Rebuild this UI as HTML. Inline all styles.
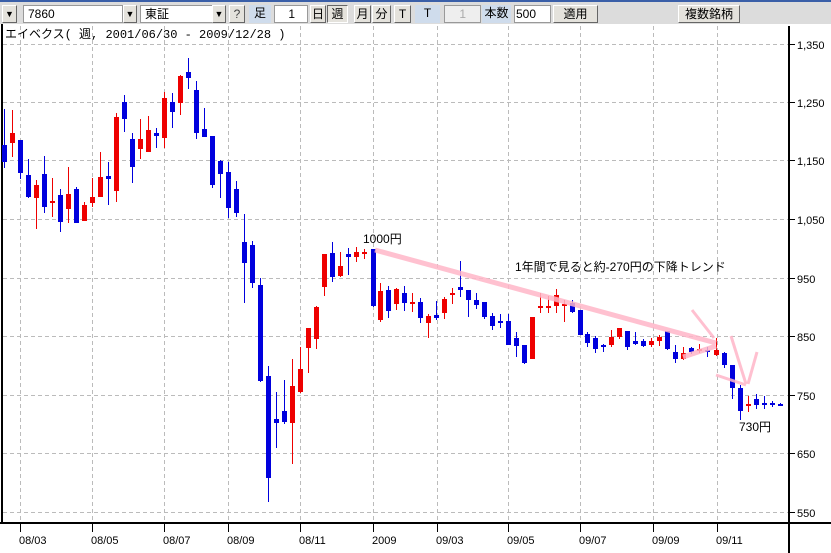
<!DOCTYPE html>
<html><head><meta charset="utf-8">
<style>
body{margin:0;width:831px;height:553px;overflow:hidden;background:#fff;font-family:"Liberation Sans","Noto Sans CJK JP",sans-serif;}
#tb{position:absolute;left:0;top:0;width:831px;height:24px;background:#dcdcdc;border-top:2px solid #3a5fa8;box-sizing:border-box;z-index:2;}
.c{position:absolute;top:3px;height:18px;box-sizing:border-box;font-size:12px;line-height:16px;}
.in{background:#fff;border:1px solid #999;}
.btn{background:#e4e2dc;border:1px solid #fff;border-right-color:#666;border-bottom-color:#666;text-align:center;}
.lb{background:#cfdcec;text-align:center;}
svg{position:absolute;left:0;top:0}
</style></head><body>
<div id="tb">
<div class="c btn" style="left:2px;width:15px;font-size:9px">▼</div>
<div class="c in" style="left:23px;width:100px;padding-left:4px">7860</div>
<div class="c btn" style="left:123px;width:14px;font-size:9px">▼</div>
<div class="c in" style="left:140px;width:86px;padding-left:4px">東証</div>
<div class="c btn" style="left:212px;width:14px;font-size:9px">▼</div>
<div class="c btn" style="left:229px;width:16px;color:#444">?</div>
<div class="c lb" style="left:249px;width:22px">足</div>
<div class="c in" style="left:274px;width:34px;text-align:right;padding-right:12px">1</div>
<div class="c btn" style="left:310px;width:16px">日</div>
<div class="c btn" style="left:327px;width:21px;border-color:#666 #fff #fff #666">週</div>
<div class="c btn" style="left:354px;width:17px">月</div>
<div class="c btn" style="left:372px;width:19px">分</div>
<div class="c btn" style="left:394px;width:17px">T</div>
<div class="c lb" style="left:415px;width:25px">T</div>
<div class="c in" style="left:444px;width:37px;background:#eee;color:#aaa;text-align:right;padding-right:14px">1</div>
<div class="c lb" style="left:482px;width:29px">本数</div>
<div class="c in" style="left:514px;width:37px;text-align:right;padding-right:14px">500</div>
<div class="c btn" style="left:553px;width:45px">適用</div>
<div class="c btn" style="left:678px;width:62px">複数銘柄</div>
</div>
<svg width="831" height="553" viewBox="0 0 831 553">
<rect x="0" y="24" width="831" height="529" fill="#fff"/>
<g stroke="#bbb" stroke-dasharray="4,3" stroke-width="1">
<line x1="3" y1="44.5" x2="789" y2="44.5"/><line x1="3" y1="102.5" x2="789" y2="102.5"/><line x1="3" y1="160.5" x2="789" y2="160.5"/><line x1="3" y1="219.5" x2="789" y2="219.5"/><line x1="3" y1="278.5" x2="789" y2="278.5"/><line x1="3" y1="336.5" x2="789" y2="336.5"/><line x1="3" y1="395.5" x2="789" y2="395.5"/><line x1="3" y1="453.5" x2="789" y2="453.5"/><line x1="3" y1="512.5" x2="789" y2="512.5"/>
<line x1="20.5" y1="26" x2="20.5" y2="523"/><line x1="92.5" y1="26" x2="92.5" y2="523"/><line x1="164.5" y1="26" x2="164.5" y2="523"/><line x1="228.5" y1="26" x2="228.5" y2="523"/><line x1="300.5" y1="26" x2="300.5" y2="523"/><line x1="373.5" y1="26" x2="373.5" y2="523"/><line x1="437.5" y1="26" x2="437.5" y2="523"/><line x1="508.5" y1="26" x2="508.5" y2="523"/><line x1="580.5" y1="26" x2="580.5" y2="523"/><line x1="653.5" y1="26" x2="653.5" y2="523"/><line x1="717.5" y1="26" x2="717.5" y2="523"/>
</g>
<g stroke="#000" stroke-width="2">
<line x1="2" y1="24" x2="2" y2="524"/><line x1="0" y1="523" x2="831" y2="523"/><line x1="789" y1="26" x2="789" y2="553"/>
</g>
<g stroke="#000" stroke-width="1">
<line x1="789" y1="44.5" x2="795" y2="44.5"/><line x1="789" y1="102.5" x2="795" y2="102.5"/><line x1="789" y1="160.5" x2="795" y2="160.5"/><line x1="789" y1="219.5" x2="795" y2="219.5"/><line x1="789" y1="278.5" x2="795" y2="278.5"/><line x1="789" y1="336.5" x2="795" y2="336.5"/><line x1="789" y1="395.5" x2="795" y2="395.5"/><line x1="789" y1="453.5" x2="795" y2="453.5"/><line x1="789" y1="512.5" x2="795" y2="512.5"/>
<line x1="20.5" y1="524" x2="20.5" y2="532"/><line x1="92.5" y1="524" x2="92.5" y2="532"/><line x1="164.5" y1="524" x2="164.5" y2="532"/><line x1="228.5" y1="524" x2="228.5" y2="532"/><line x1="300.5" y1="524" x2="300.5" y2="532"/><line x1="373.5" y1="524" x2="373.5" y2="532"/><line x1="437.5" y1="524" x2="437.5" y2="532"/><line x1="508.5" y1="524" x2="508.5" y2="532"/><line x1="580.5" y1="524" x2="580.5" y2="532"/><line x1="653.5" y1="524" x2="653.5" y2="532"/><line x1="717.5" y1="524" x2="717.5" y2="532"/>
</g>
<g font-family="Liberation Sans, sans-serif" font-size="11" fill="#000">
<text x="797" y="49">1,350</text><text x="797" y="107">1,250</text><text x="797" y="165">1,150</text><text x="797" y="224">1,050</text><text x="797" y="283">950</text><text x="797" y="341">850</text><text x="797" y="400">750</text><text x="797" y="458">650</text><text x="797" y="517">550</text>
<text x="19" y="544">08/03</text><text x="91" y="544">08/05</text><text x="163" y="544">08/07</text><text x="227" y="544">08/09</text><text x="299" y="544">08/11</text><text x="372" y="544">2009</text><text x="436" y="544">09/03</text><text x="507" y="544">09/05</text><text x="579" y="544">09/07</text><text x="652" y="544">09/09</text><text x="716" y="544">09/11</text>
</g>
<text x="5" y="38" font-family="Liberation Mono, Noto Sans CJK JP, monospace" font-size="12">エイベクス( 週, 2001/06/30 - 2009/12/28 )</text>
<g fill="#0000dd">
<rect x="4" y="109" width="1" height="59"/><rect x="2" y="145" width="5" height="17"/>
<rect x="20" y="140" width="1" height="39"/><rect x="18" y="140" width="5" height="33"/>
<rect x="28" y="159" width="1" height="39"/><rect x="26" y="175" width="5" height="22"/>
<rect x="44" y="156" width="1" height="57"/><rect x="42" y="174" width="5" height="33"/>
<rect x="60" y="189" width="1" height="43"/><rect x="58" y="195" width="5" height="27"/>
<rect x="76" y="187" width="1" height="36"/><rect x="74" y="189" width="5" height="34"/>
<rect x="108" y="162" width="1" height="43"/><rect x="106" y="176" width="5" height="3"/>
<rect x="124" y="95" width="1" height="37"/><rect x="122" y="102" width="5" height="17"/>
<rect x="132" y="133" width="1" height="50"/><rect x="130" y="139" width="5" height="28"/>
<rect x="156" y="128" width="1" height="20"/><rect x="154" y="133" width="5" height="3"/>
<rect x="172" y="93" width="1" height="35"/><rect x="170" y="102" width="5" height="10"/>
<rect x="188" y="58" width="1" height="31"/><rect x="186" y="72" width="5" height="6"/>
<rect x="196" y="81" width="1" height="58"/><rect x="194" y="90" width="5" height="43"/>
<rect x="204" y="108" width="1" height="29"/><rect x="202" y="129" width="5" height="8"/>
<rect x="212" y="136" width="1" height="52"/><rect x="210" y="136" width="5" height="49"/>
<rect x="220" y="160" width="1" height="38"/><rect x="218" y="161" width="5" height="13"/>
<rect x="228" y="162" width="1" height="56"/><rect x="226" y="172" width="5" height="36"/>
<rect x="236" y="181" width="1" height="36"/><rect x="234" y="189" width="5" height="24"/>
<rect x="244" y="214" width="1" height="89"/><rect x="242" y="242" width="5" height="21"/>
<rect x="252" y="241" width="1" height="47"/><rect x="250" y="245" width="5" height="38"/>
<rect x="260" y="278" width="1" height="104"/><rect x="258" y="285" width="5" height="96"/>
<rect x="268" y="366" width="1" height="136"/><rect x="266" y="376" width="5" height="102"/>
<rect x="276" y="392" width="1" height="56"/><rect x="274" y="419" width="5" height="4"/>
<rect x="284" y="380" width="1" height="44"/><rect x="282" y="411" width="5" height="11"/>
<rect x="332" y="242" width="1" height="40"/><rect x="330" y="253" width="5" height="24"/>
<rect x="348" y="248" width="1" height="27"/><rect x="346" y="254" width="5" height="3"/>
<rect x="373" y="249" width="1" height="58"/><rect x="371" y="249" width="5" height="57"/>
<rect x="388" y="286" width="1" height="32"/><rect x="386" y="290" width="5" height="21"/>
<rect x="404" y="286" width="1" height="25"/><rect x="402" y="293" width="5" height="10"/>
<rect x="420" y="298" width="1" height="25"/><rect x="418" y="302" width="5" height="16"/>
<rect x="436" y="301" width="1" height="19"/><rect x="434" y="315" width="5" height="3"/>
<rect x="460" y="261" width="1" height="36"/><rect x="458" y="287" width="5" height="3"/>
<rect x="468" y="290" width="1" height="27"/><rect x="466" y="290" width="5" height="10"/>
<rect x="476" y="293" width="1" height="16"/><rect x="474" y="300" width="5" height="5"/>
<rect x="484" y="302" width="1" height="17"/><rect x="482" y="302" width="5" height="15"/>
<rect x="492" y="313" width="1" height="17"/><rect x="490" y="316" width="5" height="10"/>
<rect x="500" y="314" width="1" height="14"/><rect x="498" y="321" width="5" height="2"/>
<rect x="508" y="314" width="1" height="31"/><rect x="506" y="321" width="5" height="24"/>
<rect x="516" y="332" width="1" height="25"/><rect x="514" y="338" width="5" height="8"/>
<rect x="524" y="345" width="1" height="19"/><rect x="522" y="345" width="5" height="18"/>
<rect x="572" y="300" width="1" height="13"/><rect x="570" y="303" width="5" height="9"/>
<rect x="580" y="310" width="1" height="25"/><rect x="578" y="310" width="5" height="25"/>
<rect x="587" y="332" width="1" height="15"/><rect x="585" y="334" width="5" height="9"/>
<rect x="595" y="336" width="1" height="17"/><rect x="593" y="338" width="5" height="11"/>
<rect x="603" y="344" width="1" height="8"/><rect x="601" y="345" width="5" height="2"/>
<rect x="627" y="331" width="1" height="19"/><rect x="625" y="331" width="5" height="16"/>
<rect x="635" y="332" width="1" height="13"/><rect x="633" y="341" width="5" height="3"/>
<rect x="643" y="339" width="1" height="8"/><rect x="641" y="341" width="5" height="5"/>
<rect x="667" y="331" width="1" height="19"/><rect x="665" y="331" width="5" height="18"/>
<rect x="675" y="345" width="1" height="18"/><rect x="673" y="352" width="5" height="7"/>
<rect x="691" y="347" width="1" height="7"/><rect x="689" y="348" width="5" height="4"/>
<rect x="707" y="347" width="1" height="10"/><rect x="705" y="350" width="5" height="2"/>
<rect x="724" y="352" width="1" height="16"/><rect x="722" y="353" width="5" height="12"/>
<rect x="732" y="365" width="1" height="34"/><rect x="730" y="365" width="5" height="23"/>
<rect x="740" y="385" width="1" height="35"/><rect x="738" y="388" width="5" height="23"/>
<rect x="756" y="394" width="1" height="15"/><rect x="754" y="399" width="5" height="6"/>
<rect x="764" y="396" width="1" height="13"/><rect x="762" y="403" width="5" height="2"/>
<rect x="772" y="401" width="1" height="6"/><rect x="770" y="403" width="5" height="2"/>
<rect x="780" y="403" width="1" height="3"/><rect x="778" y="404" width="5" height="2"/>
</g>
<g fill="#ee0000">
<rect x="12" y="110" width="1" height="47"/><rect x="10" y="133" width="5" height="10"/>
<rect x="36" y="180" width="1" height="49"/><rect x="34" y="185" width="5" height="13"/>
<rect x="52" y="178" width="1" height="39"/><rect x="50" y="201" width="5" height="2"/>
<rect x="68" y="167" width="1" height="56"/><rect x="66" y="194" width="5" height="15"/>
<rect x="84" y="202" width="1" height="19"/><rect x="82" y="205" width="5" height="16"/>
<rect x="92" y="178" width="1" height="29"/><rect x="90" y="197" width="5" height="6"/>
<rect x="100" y="152" width="1" height="45"/><rect x="98" y="177" width="5" height="20"/>
<rect x="116" y="113" width="1" height="89"/><rect x="114" y="117" width="5" height="74"/>
<rect x="140" y="119" width="1" height="40"/><rect x="138" y="139" width="5" height="10"/>
<rect x="148" y="116" width="1" height="36"/><rect x="146" y="130" width="5" height="22"/>
<rect x="164" y="92" width="1" height="56"/><rect x="162" y="98" width="5" height="40"/>
<rect x="180" y="75" width="1" height="40"/><rect x="178" y="76" width="5" height="27"/>
<rect x="292" y="359" width="1" height="105"/><rect x="290" y="386" width="5" height="37"/>
<rect x="300" y="347" width="1" height="46"/><rect x="298" y="369" width="5" height="23"/>
<rect x="308" y="328" width="1" height="45"/><rect x="306" y="328" width="5" height="20"/>
<rect x="316" y="306" width="1" height="43"/><rect x="314" y="307" width="5" height="32"/>
<rect x="324" y="254" width="1" height="42"/><rect x="322" y="254" width="5" height="33"/>
<rect x="340" y="252" width="1" height="25"/><rect x="338" y="266" width="5" height="10"/>
<rect x="356" y="247" width="1" height="15"/><rect x="354" y="252" width="5" height="5"/>
<rect x="364" y="249" width="1" height="10"/><rect x="362" y="252" width="5" height="2"/>
<rect x="380" y="283" width="1" height="39"/><rect x="378" y="291" width="5" height="29"/>
<rect x="396" y="288" width="1" height="22"/><rect x="394" y="289" width="5" height="15"/>
<rect x="412" y="293" width="1" height="19"/><rect x="410" y="302" width="5" height="2"/>
<rect x="428" y="314" width="1" height="24"/><rect x="426" y="316" width="5" height="7"/>
<rect x="444" y="297" width="1" height="22"/><rect x="442" y="299" width="5" height="14"/>
<rect x="452" y="288" width="1" height="16"/><rect x="450" y="293" width="5" height="2"/>
<rect x="532" y="317" width="1" height="42"/><rect x="530" y="317" width="5" height="42"/>
<rect x="540" y="293" width="1" height="20"/><rect x="538" y="306" width="5" height="2"/>
<rect x="548" y="296" width="1" height="17"/><rect x="546" y="306" width="5" height="2"/>
<rect x="556" y="289" width="1" height="24"/><rect x="554" y="295" width="5" height="11"/>
<rect x="564" y="300" width="1" height="22"/><rect x="562" y="304" width="5" height="2"/>
<rect x="611" y="330" width="1" height="17"/><rect x="609" y="337" width="5" height="8"/>
<rect x="619" y="328" width="1" height="11"/><rect x="617" y="328" width="5" height="9"/>
<rect x="651" y="338" width="1" height="9"/><rect x="649" y="341" width="5" height="4"/>
<rect x="659" y="335" width="1" height="11"/><rect x="657" y="337" width="5" height="4"/>
<rect x="683" y="347" width="1" height="13"/><rect x="681" y="353" width="5" height="6"/>
<rect x="699" y="344" width="1" height="9"/><rect x="697" y="349" width="5" height="2"/>
<rect x="716" y="338" width="1" height="18"/><rect x="714" y="350" width="5" height="5"/>
<rect x="748" y="396" width="1" height="16"/><rect x="746" y="404" width="5" height="2"/>
</g>
<g stroke="#ffb6c8" stroke-width="5" fill="none" opacity="0.85">
<line x1="375" y1="250" x2="716" y2="343"/>
<line x1="683" y1="357" x2="716" y2="346"/>
</g>
<g stroke="#ffb6c8" stroke-width="3" fill="none" opacity="0.85">
<line x1="692" y1="310" x2="714" y2="338"/>
<line x1="731" y1="336" x2="746" y2="384"/>
<line x1="757" y1="352" x2="748" y2="384"/>
<line x1="716" y1="375" x2="746" y2="385"/>
</g>
<g font-family="Liberation Sans, Noto Sans CJK JP, sans-serif" font-size="12" fill="#000">
<text x="363" y="243">1000円</text>
<text x="515" y="271">1年間で見ると約-270円の下降トレンド</text>
<text x="739" y="431">730円</text>
</g>
</svg>
</body></html>
